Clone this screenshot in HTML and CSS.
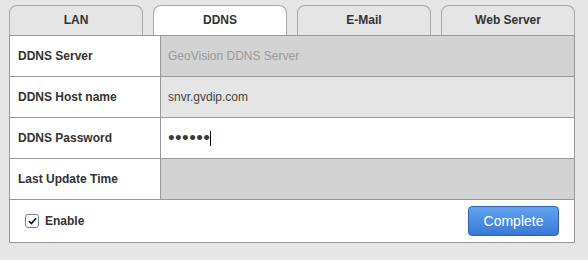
FILE: index.html
```html
<!DOCTYPE html>
<html lang="en">
<head>
  <meta charset="UTF-8">
  <title>DDNS</title>
  <link rel="stylesheet" href="styles.css">
</head>
<body>

  <div class="tabs">
    <div class="tab">LAN</div>
    <div class="tab active">DDNS</div>
    <div class="tab">E-Mail</div>
    <div class="tab">Web Server</div>
  </div>

  <div class="panel">
    <div class="row">
      <div class="label">DDNS Server</div>
      <div class="value dark placeholder">GeoVision DDNS Server</div>
    </div>
    <div class="row">
      <div class="label">DDNS Host name</div>
      <div class="value light">snvr.gvdip.com</div>
    </div>
    <div class="row">
      <div class="label">DDNS Password</div>
      <div class="value"><span class="dots">••••••</span><span class="caret"></span></div>
    </div>
    <div class="row">
      <div class="label">Last Update Time</div>
      <div class="value dark"></div>
    </div>

    <div class="footer">
      <label class="check">
        <span class="box">
          <svg width="9" height="8" viewBox="0 0 9 8"><path d="M1 4.2 L3.4 6.6 L8 1.2" fill="none" stroke="#111" stroke-width="1.6"/></svg>
        </span>
        Enable
      </label>
      <button class="button">Complete</button>
    </div>
  </div>

</body>
</html>
```

FILE: styles.css
```css
body {
  font-family: 'Liberation Sans', Arial, sans-serif;
  background-color: #e6e6e6;
  color: #333;
  margin: 0;
  padding: 5px 13px 0 9px;
}
.tabs {
  display: grid;
  grid-template-columns: repeat(4, 1fr);
  gap: 10px;
}
.tab {
  height: 29px;
  line-height: 29px;
  text-align: center;
  font-size: 12px;
  font-weight: bold;
  background-color: #e5e5e5;
  border: 1px solid #a8a8a8;
  border-bottom: none;
  border-radius: 8px 8px 0 0;
}
.tab.active {
  background-color: #fff;
}
.panel {
  background-color: #fff;
  border: 1px solid #999;
}
.row {
  display: flex;
  height: 40px;
  border-bottom: 1px solid #999;
}
.label {
  width: 142px;
  padding-left: 8px;
  border-right: 1px solid #999;
  font-size: 12px;
  font-weight: bold;
  display: flex;
  align-items: center;
}
.value {
  flex: 1;
  padding-left: 7px;
  font-size: 12px;
  color: #444;
  display: flex;
  align-items: center;
}
.value.dark {
  background-color: #d3d3d3;
}
.value.light {
  background-color: #e5e5e5;
}
.placeholder {
  color: #999;
}
.dots {
  font-size: 19px;
  letter-spacing: 0.4px;
  color: #3a3a3a;
}
.caret {
  width: 1px;
  height: 15px;
  background-color: #000;
}
.footer {
  height: 42px;
  display: flex;
  align-items: center;
  justify-content: space-between;
  padding: 0 15px 0 15px;
}
.check {
  display: flex;
  align-items: center;
  gap: 6px;
  font-size: 12px;
  font-weight: bold;
}
.box {
  width: 12px;
  height: 12px;
  border: 1px solid #6c80a8;
  border-radius: 3px;
  display: flex;
  align-items: center;
  justify-content: center;
  background-color: #fff;
}
.button {
  width: 91px;
  height: 30px;
  font-family: 'Liberation Sans', Arial, sans-serif;
  font-size: 14px;
  color: #fff;
  background: linear-gradient(#62a3ee, #3b78d6);
  border: 1px solid #2f62b0;
  border-radius: 4px;
  padding: 0;
}
```
